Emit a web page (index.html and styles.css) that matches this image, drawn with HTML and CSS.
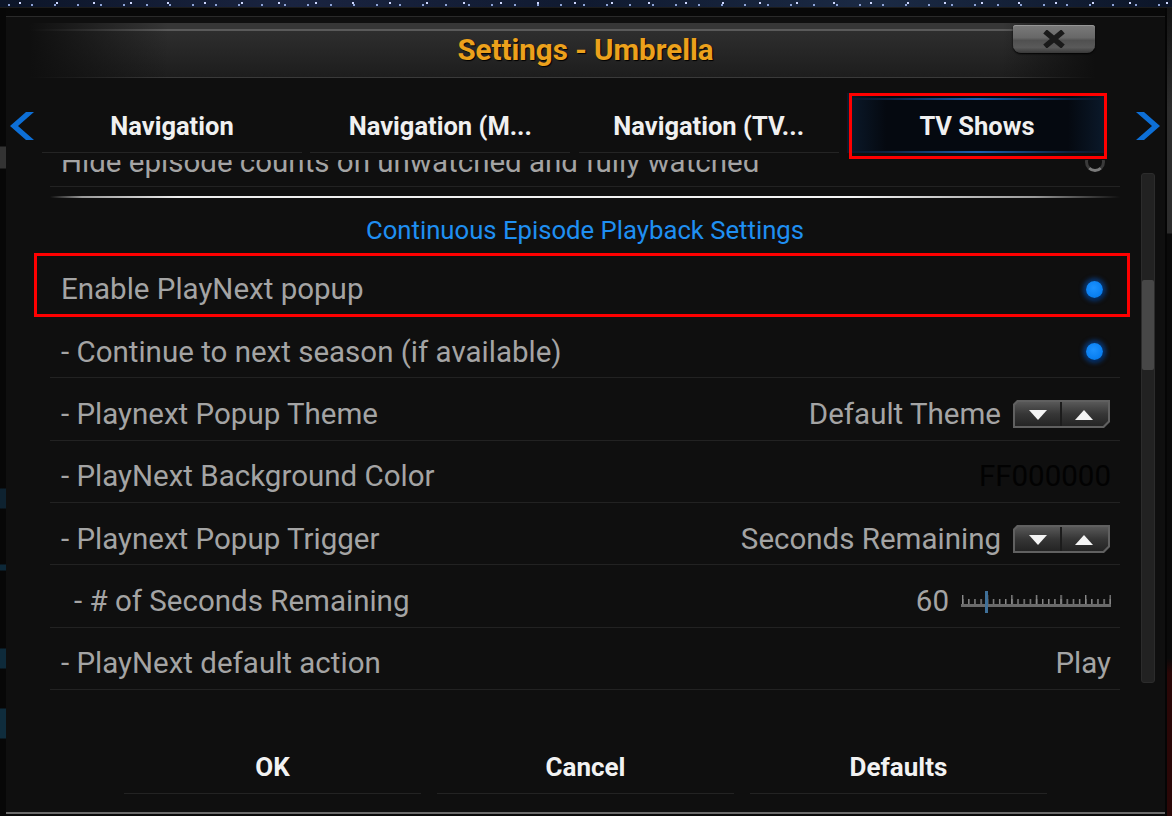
FILE: index.html
```html
<!DOCTYPE html>
<html lang="en">
<head>
<meta charset="utf-8">
<title>Settings - Umbrella</title>
<link rel="stylesheet" href="styles.css">
</head>
<body>
<div class="sky"></div>
<div class="stage">
  <div class="edge-left"></div>
  <div class="dialog">
    <header class="titlebar">
      <h1 class="title">Settings - Umbrella</h1>
      <div class="close">
        <svg width="24" height="18" viewBox="0 0 24 18"><path d="M3 1.5 L21 16.5 M21 1.5 L3 16.5" stroke="#1a1a1a" stroke-width="5.5"/></svg>
      </div>
    </header>

    <nav class="tabs">
      <span class="arrow left"><svg width="24" height="28" viewBox="0 0 24 28"><polygon points="24,0 16,0 0,14 16,28 24,28 8,14" fill="#0d6fd6"/></svg></span>
      <div class="tab">Navigation</div>
      <div class="tab">Navigation (M...</div>
      <div class="tab">Navigation (TV...</div>
      <div class="tab active">TV Shows</div>
      <span class="arrow right"><svg width="24" height="28" viewBox="0 0 24 28"><polygon points="0,0 8,0 24,14 8,28 0,28 16,14" fill="#0d6fd6"/></svg></span>
    </nav>

    <div class="content">
      <div class="list">
        <div class="row partial">
          <span class="label">Hide episode counts on unwatched and fully watched</span>
          <span class="radio off"></span>
        </div>
        <div class="section">
          <div class="glow"></div>
          <div class="section-title">Continuous Episode Playback Settings</div>
        </div>
        <div class="row focus">
          <span class="label">Enable PlayNext popup</span>
          <span class="radio"></span>
        </div>
        <div class="row">
          <span class="label">- Continue to next season (if available)</span>
          <span class="radio"></span>
        </div>
        <div class="row">
          <span class="label">- Playnext Popup Theme</span>
          <span class="value">Default Theme</span>
          <svg class="spinner" width="99" height="30" viewBox="0 0 99 30">
            <defs>
              <linearGradient id="spin" x1="0" y1="0" x2="0" y2="1">
                <stop offset="0" stop-color="#585858"/>
                <stop offset="0.5" stop-color="#363636"/>
                <stop offset="1" stop-color="#242424"/>
              </linearGradient>
            </defs>
            <polygon points="5,1 98,1 98,23 92,29 1,29 1,5" fill="#606060"/>
            <polygon points="6,3 48,3 48,27 3,27 3,6" fill="url(#spin)"/>
            <polygon points="50,3 96,3 96,22 91,27 50,27" fill="url(#spin)"/>
            <rect x="48" y="3" width="2" height="24" fill="#1c1c1c"/>
            <polygon points="17,11 35,11 26,21" fill="#f4f4f4"/>
            <polygon points="63,21 81,21 72,11" fill="#f4f4f4"/>
          </svg>
        </div>
        <div class="row">
          <span class="label">- PlayNext Background Color</span>
          <span class="value dark">FF000000</span>
        </div>
        <div class="row">
          <span class="label">- Playnext Popup Trigger</span>
          <span class="value">Seconds Remaining</span>
          <svg class="spinner" width="99" height="30" viewBox="0 0 99 30">
            <polygon points="5,1 98,1 98,23 92,29 1,29 1,5" fill="#606060"/>
            <polygon points="6,3 48,3 48,27 3,27 3,6" fill="url(#spin)"/>
            <polygon points="50,3 96,3 96,22 91,27 50,27" fill="url(#spin)"/>
            <rect x="48" y="3" width="2" height="24" fill="#1c1c1c"/>
            <polygon points="17,11 35,11 26,21" fill="#f4f4f4"/>
            <polygon points="63,21 81,21 72,11" fill="#f4f4f4"/>
          </svg>
        </div>
        <div class="row indent">
          <span class="label">- # of Seconds Remaining</span>
          <span class="value">60</span>
          <svg class="slider" width="150" height="22" viewBox="0 0 150 22">
            <defs>
              <pattern id="tick-s" x="1" y="0" width="6.15" height="22" patternUnits="userSpaceOnUse">
                <rect x="0" y="8" width="1.4" height="6" fill="#8a8a8a"/>
              </pattern>
              <pattern id="tick-l" x="1" y="0" width="24.6" height="22" patternUnits="userSpaceOnUse">
                <rect x="0" y="4" width="1.4" height="10" fill="#8a8a8a"/>
              </pattern>
            </defs>
            <rect x="0" y="0" width="150" height="22" fill="url(#tick-s)"/>
            <rect x="0" y="0" width="150" height="22" fill="url(#tick-l)"/>
            <rect x="0" y="13" width="150" height="3" fill="#6a6a6a"/>
            <rect x="24" y="0" width="3" height="22" fill="#3f7099"/>
          </svg>
        </div>
        <div class="row">
          <span class="label">- PlayNext default action</span>
          <span class="value">Play</span>
        </div>
      </div>
      <div class="scrollbar"><div class="thumb"></div></div>
    </div>

    <div class="buttons">
      <div class="btn">OK</div>
      <div class="btn">Cancel</div>
      <div class="btn">Defaults</div>
    </div>
  </div>
  <div class="edge-right"></div>
</div>
</body>
</html>
```

FILE: styles.css
```css
html, body {
  margin: 0;
  padding: 0;
}

body {
  width: 1172px;
  height: 816px;
  overflow: hidden;
  background: #060606;
  font-family: Roboto, "Liberation Sans", sans-serif;
}

.sky {
  height: 8px;
  background:
    radial-gradient(circle at 20px 3px, #cfd8ff 0.8px, transparent 1.2px) 0 0 / 37px 8px,
    radial-gradient(circle at 9px 5px, #8fa4d8 0.7px, transparent 1.1px) 0 0 / 23px 8px,
    linear-gradient(90deg, #0c1528, #1a2440 25%, #101a30 50%, #1b2a44 75%, #0c1528);
  border-bottom: 1px solid #1c1c1c;
  box-sizing: border-box;
}

.stage {
  display: flex;
  height: 808px;
  background: #080808;
}

.edge-left {
  width: 6px;
  background:
    linear-gradient(180deg,
      transparent 0, transparent 138px, #333 139px, #333 160px, transparent 161px,
      transparent 480px, #0e2230 481px, #0e2230 500px, transparent 501px,
      transparent 556px, #0d2838 557px, #0d2838 562px, transparent 563px,
      transparent 640px, #0e2a3a 641px, #0e2a3a 660px, transparent 661px,
      transparent 700px, #0f2c3c 701px, #0f2c3c 730px, transparent 731px),
    #070707;
}

.edge-right {
  flex: 1;
  border-left: 2px solid #050505;
  background: linear-gradient(180deg,
    #141414 0, #2c2c2c 100px, #2c2c2c 225px, #0a0a0a 226px,
    #0a0a0a 650px, #2a0707 665px, #2a0707 808px);
}

.dialog {
  width: 1159px;
  height: 798px;
  margin-top: 8px;
  box-sizing: border-box;
  background: #0f0f0f;
  border-top: 1px solid #2a2a2a;
  border-bottom: 2px solid #6c6c6c;
  display: flex;
  flex-direction: column;
}

/* ---------- title bar ---------- */
.titlebar {
  margin-top: 6px;
  height: 55px;
  display: grid;
  grid-template-columns: 1fr auto 1fr;
  align-items: center;
  background:
    linear-gradient(90deg, #0f0f0f 2%, rgba(15,15,15,0) 14%, rgba(15,15,15,0) 86%, #0f0f0f 94%),
    linear-gradient(180deg,
      #363636 0, #363636 6px, #5a5a5a 6px, #5a5a5a 8px,
      #2e2e2e 8px, #1d1d1d 54px, #3a3a3a 54px, #3a3a3a 55px);
}

.title {
  grid-column: 2;
  margin: 0;
  font-size: 29.5px;
  font-weight: 700;
  line-height: 1;
  color: #eca11c;
  text-shadow: 1px 1px 1px #000;
}

.close {
  grid-column: 3;
  justify-self: end;
  align-self: start;
  margin: 2px 70px 0 0;
  width: 82px;
  height: 28px;
  border-radius: 3px 3px 8px 8px;
  background: linear-gradient(180deg, #7a7a7a 0, #686868 45%, #505050 55%, #5a5a5a 80%, #383838 100%);
  box-shadow: 0 1px 2px #000, inset 0 1px 0 #969696;
  display: flex;
  align-items: center;
  justify-content: center;
}

/* ---------- tabs ---------- */
.tabs {
  margin-top: 15px;
  height: 60px;
  display: flex;
  align-items: center;
  padding-left: 4px;
}

.arrow {
  display: flex;
  margin-top: 6px;
}

.arrow.left {
  margin-right: 8px;
}

.arrow.right {
  margin-left: 29px;
}

.tab {
  width: 260px;
  height: 60px;
  box-sizing: border-box;
  display: flex;
  align-items: center;
  justify-content: center;
  padding-top: 6px;
  font-size: 25.5px;
  font-weight: 700;
  color: #f0f0f0;
  white-space: nowrap;
  border-bottom: 1px solid #242424;
}

.tab + .tab {
  margin-left: 8.33px;
}

.tab.active {
  position: relative;
  border-bottom: none;
  background:
    linear-gradient(90deg, rgba(20,90,180,0) 0, rgba(30,110,210,0.85) 50%, rgba(20,90,180,0) 100%) 0 5px / 100% 2px no-repeat,
    linear-gradient(90deg, rgba(20,90,180,0) 0, rgba(30,110,210,0.85) 50%, rgba(20,90,180,0) 100%) 0 58px / 100% 2px no-repeat,
    linear-gradient(90deg, #0b1a2c 0, #050910 15%, #050910 85%, #0b1a2c 100%);
}

.tab.active::after {
  content: "";
  position: absolute;
  z-index: 3;
  left: 2px;
  right: 0;
  top: 0;
  bottom: -6px;
  border: 3px solid #ff0000;
}

/* ---------- list ---------- */
.content {
  margin-top: 7px;
  height: 532px;
  display: flex;
}

.list {
  width: 1070px;
  margin-left: 44px;
  clip-path: inset(0 -40px 0 -40px);
}

.row {
  height: 62.33px;
  box-sizing: border-box;
  display: flex;
  align-items: center;
  padding: 10px 9px 0 11px;
  border-bottom: 1px solid #222;
  font-size: 29.5px;
  color: #a4a4a4;
  white-space: nowrap;
}

.row.partial {
  margin-top: -35px;
  padding-top: 13px;
}

.row.indent {
  padding-left: 24px;
}

.row.focus {
  position: relative;
}

.row.focus::after {
  content: "";
  position: absolute;
  z-index: 3;
  left: -16px;
  right: -10px;
  top: -1px;
  bottom: -2px;
  border: 3px solid #ff0000;
}

.label {
  flex: 1;
}

.value {
  color: #a4a4a4;
}

.value.dark {
  color: #020202;
}

.radio {
  width: 17px;
  height: 17px;
  margin-right: 8px;
  border-radius: 50%;
  background: radial-gradient(circle at 45% 40%, #1c92ff 0, #0a80f2 60%, #0868cc 100%);
  box-shadow: 0 0 4px 3px rgba(0, 90, 205, 0.5), 1px 2px 2px rgba(0, 0, 0, 0.6);
}

.radio.off {
  width: 20px;
  height: 20px;
  margin-right: 6px;
  box-sizing: border-box;
  background: transparent;
  border: 3px solid #3a3a3a;
  border-bottom-color: #7a7a7a;
  box-shadow: none;
}

.spinner {
  margin-left: 11px;
}

.slider {
  margin-left: 12px;
  margin-top: 3px;
}

.section {
  height: 66.3px;
  box-sizing: border-box;
  padding-top: 9px;
}

.glow {
  height: 2px;
  background: linear-gradient(90deg, rgba(255,255,255,0) 0, #9a9a9a 3%, #ededed 12%, #f4f4f4 75%, #9a9a9a 92%, rgba(255,255,255,0) 100%);
}

.section-title {
  margin-top: 17px;
  line-height: 30px;
  text-align: center;
  font-size: 25.7px;
  color: #1f8ff2;
}

.scrollbar {
  width: 14px;
  height: 510px;
  margin: 13px 0 0 21px;
  box-sizing: border-box;
  border-radius: 3px;
  background: #222;
  border: 1px solid #2c2c2c;
}

.thumb {
  margin-top: 106px;
  height: 90px;
  border-radius: 2px;
  background: #474747;
}

/* ---------- buttons ---------- */
.buttons {
  margin-top: 46px;
  display: flex;
  justify-content: center;
  gap: 16px;
}

.btn {
  width: 297px;
  height: 56px;
  box-sizing: border-box;
  display: flex;
  align-items: center;
  justify-content: center;
  padding-top: 2px;
  border-bottom: 1px solid #232323;
  font-size: 26px;
  font-weight: 700;
  color: #f2f2f2;
}
```
